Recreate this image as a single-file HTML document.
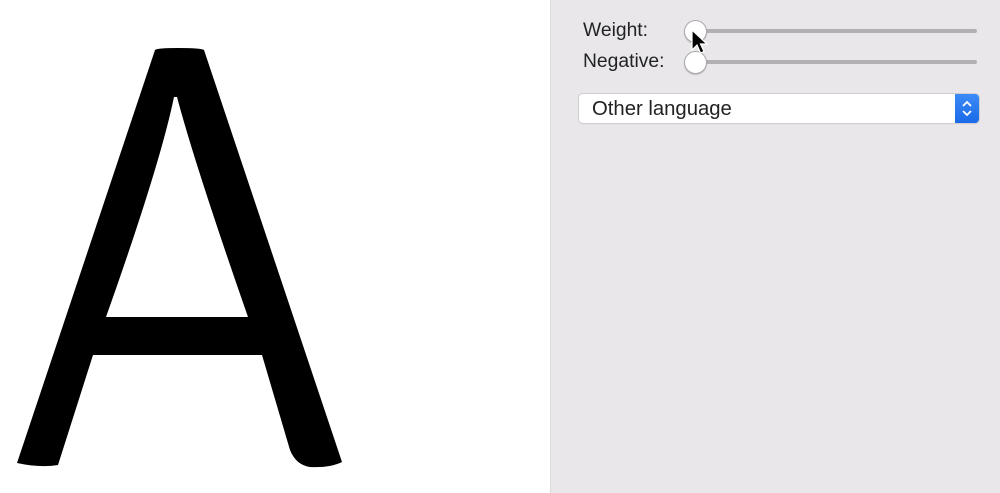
<!DOCTYPE html>
<html><head><style>
body{margin:0;width:1000px;height:493px;overflow:hidden;background:#fff;position:relative;font-family:"Liberation Sans",sans-serif;}
#panel{position:absolute;left:550px;top:0;width:450px;height:493px;background:#e9e7ea;border-left:1px solid #dcdadd;}
.lbl{position:absolute;left:583px;font-size:19.3px;color:#222;}
.track{position:absolute;left:700px;width:277px;height:4px;border-radius:2px;background:#b2b0b3;}
.knob{position:absolute;width:21px;height:21px;border-radius:50%;background:#fff;border:1px solid #aaa;box-shadow:0 1px 1px rgba(0,0,0,.2);}
#pop{position:absolute;left:579px;top:94px;width:400px;height:29px;background:#fff;border-radius:4px;box-shadow:0 0 0 1px #cfcdd0,0 1px 1px rgba(0,0,0,.2);}
#pop span{position:absolute;left:13px;top:4px;font-size:20.3px;color:#222;}
#btn{position:absolute;right:0;top:0;width:24px;height:29px;background:linear-gradient(#3d8bf7,#1a6ae8);border-radius:0 4px 4px 0;}
</style></head><body>
<svg width="550" height="493" style="position:absolute;left:0;top:0">
<path fill-rule="evenodd" fill="#000" d="M155,50 Q157,48 178,48 Q201,48 204,50 L342,462 Q330,468 310,467 Q296,465 290,450 L262,355 L93,355 L58,465 Q40,468 17,463 Z M174,97 L177,97 Q195,165 248,317 L106,317 Q160,165 174,97 Z"/>
</svg>
<div id="panel"></div>
<div class="lbl" style="top:20px">Weight:</div>
<div class="lbl" style="top:51px">Negative:</div>
<div class="track" style="top:29px"></div>
<div class="track" style="top:60px"></div>
<div class="knob" style="left:684px;top:20px"></div>
<div class="knob" style="left:684px;top:51px"></div>
<svg width="24" height="30" style="position:absolute;left:691px;top:29px"><path d="M1,1 L1,21 L6,16 L9.5,24 L13,22.5 L9.5,15 L16,15 Z" fill="#000" stroke="#fff" stroke-width="1.2"/></svg>
<div id="pop"><span>Other language</span><div id="btn"><svg width="24" height="29"><path d="M8,12 L12,8 L16,12 M8,17 L12,21 L16,17" stroke="#fff" stroke-width="1.8" fill="none"/></svg></div></div>
</body></html>
